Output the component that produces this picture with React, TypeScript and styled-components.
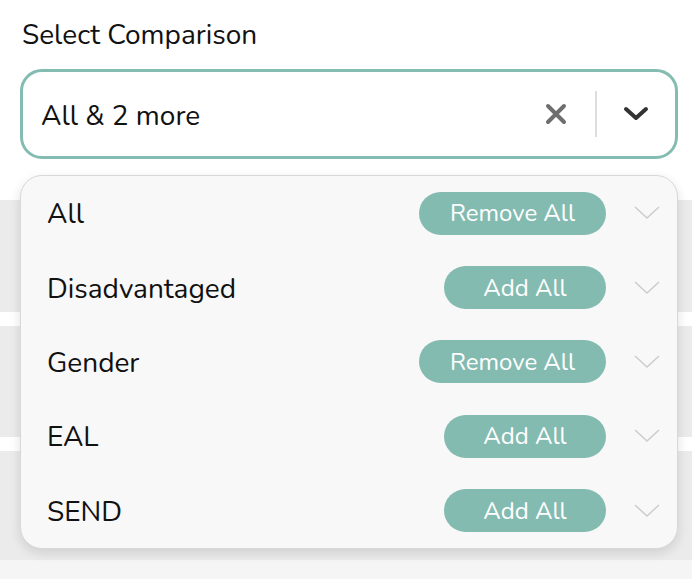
import React from "react";
import styled, { createGlobalStyle } from "styled-components";

const GlobalStyle = createGlobalStyle`
  html, body {
    margin: 0;
    padding: 0;
    background: #ffffff;
    font-family: "Nunito", "Open Sans", "Noto Sans", sans-serif;
    color: #111;
  }
`;

const Page = styled.div`
  position: relative;
  width: 692px;
  height: 579px;
  overflow: hidden;
  background: #ffffff;
`;

const Top = styled.div`
  padding: 0 14px 0 20px;
`;

const Label = styled.div`
  padding: 17px 0 0 2px;
  height: 69px;
  box-sizing: border-box;
  font-size: 28px;
  line-height: 36px;
  color: #111;
`;

const SelectBox = styled.div`
  height: 90px;
  box-sizing: border-box;
  border: 3px solid #84bcb2;
  border-radius: 22px;
  display: flex;
  align-items: center;
  padding-left: 18px;
`;

const Value = styled.div`
  flex: 1;
  padding-top: 4px;
  font-size: 28px;
  color: #111;
`;

const IconButton = styled.div`
  width: 40px;
  height: 40px;
  display: flex;
  align-items: center;
  justify-content: center;
`;

const Separator = styled.div`
  width: 2px;
  height: 46px;
  background: #dddddd;
  margin: 0 19px 0 19px;
`;

const Spacer = styled.div`
  width: 19px;
`;

const Bands = styled.div`
  margin-top: 41px;
  display: flex;
  flex-direction: column;
  gap: 14px;
`;

const Band = styled.div<{ $h: number }>`
  height: ${(p) => p.$h}px;
  background: #ebebeb;
`;

const BottomFill = styled.div`
  height: 40px;
  background: #f5f5f5;
`;

const Menu = styled.div`
  position: absolute;
  left: 20px;
  top: 175px;
  width: 658px;
  box-sizing: border-box;
  background: #f8f8f8;
  border: 1px solid #d8d8d8;
  border-radius: 22px;
  box-shadow: 0 4px 12px rgba(0, 0, 0, 0.12);
  display: flex;
  flex-direction: column;
`;

const Row = styled.div`
  height: 74.4px;
  display: flex;
  align-items: center;
  padding-left: 26px;
  padding-right: 16px;
`;

const RowLabel = styled.div`
  flex: 1;
  padding-top: 2px;
  font-size: 28px;
  color: #111;
`;

const Pill = styled.button`
  height: 43px;
  border: none;
  border-radius: 22px;
  background: #84bbb1;
  color: #ffffff;
  font-family: inherit;
  font-size: 24px;
  padding: 0;
  display: flex;
  align-items: center;
  justify-content: center;
`;

const Chevron = styled.div`
  width: 28px;
  margin-left: 27px;
  display: flex;
  justify-content: center;
`;

const groups = [
  { name: "All", selected: true },
  { name: "Disadvantaged", selected: false },
  { name: "Gender", selected: true },
  { name: "EAL", selected: false },
  { name: "SEND", selected: false },
];

export default function App() {
  return (
    <Page>
      <GlobalStyle />
      <Top>
        <Label>Select Comparison</Label>
        <SelectBox>
          <Value>All &amp; 2 more</Value>
          <IconButton>
            <svg width="22" height="22" viewBox="0 0 22 22">
              <path
                d="M3 3 L19 19 M19 3 L3 19"
                stroke="#6e6e6e"
                strokeWidth="4"
                strokeLinecap="round"
              />
            </svg>
          </IconButton>
          <Separator />
          <IconButton>
            <svg width="26" height="16" viewBox="0 0 26 16">
              <path
                d="M3 3 L13 12 L23 3"
                fill="none"
                stroke="#333333"
                strokeWidth="4"
                strokeLinecap="round"
                strokeLinejoin="round"
              />
            </svg>
          </IconButton>
          <Spacer />
        </SelectBox>
      </Top>
      <Bands>
        <Band $h={112} />
        <Band $h={111} />
        <Band $h={109} />
      </Bands>
      <BottomFill />
      <Menu>
        {groups.map((g) => (
          <Row key={g.name}>
            <RowLabel>{g.name}</RowLabel>
            <Pill style={{ width: g.selected ? 187 : 162 }}>
              {g.selected ? "Remove All" : "Add All"}
            </Pill>
            <Chevron>
              <svg width="26" height="14" viewBox="0 0 26 14">
                <path
                  d="M1 1 L13 12 L25 1"
                  fill="none"
                  stroke="#cccccc"
                  strokeWidth="1.5"
                />
              </svg>
            </Chevron>
          </Row>
        ))}
      </Menu>
    </Page>
  );
}
